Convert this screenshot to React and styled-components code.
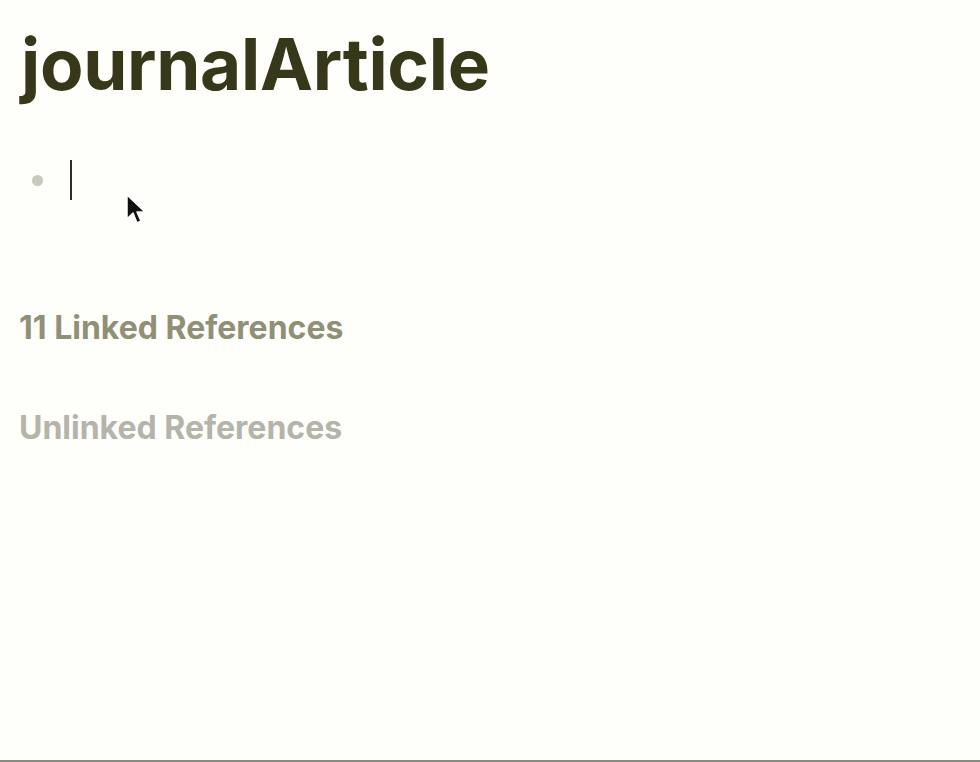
import React from "react";
import styled, { createGlobalStyle } from "styled-components";

const Global = createGlobalStyle`
  html, body { margin: 0; padding: 0; background: #fefefa; }
  body { font-family: Inter, "Noto Sans", sans-serif; }
`;

const Page = styled.div`
  position: relative;
  width: 980px;
  height: 762px;
  box-sizing: border-box;
  border-bottom: 2px solid #8a8a82;
  padding: 24px 19px 0 19px;
  overflow: hidden;
`;

const Title = styled.h1`
  margin: 0 0 0 2px;
  font-size: 71px;
  font-weight: 700;
  line-height: 80px;
  letter-spacing: -0.3px;
  color: #37371a;
`;

const BlockRow = styled.div`
  display: flex;
  align-items: center;
  height: 40px;
  margin-top: 56px;
  padding-left: 13px;
`;

const Bullet = styled.span`
  width: 11px;
  height: 11px;
  border-radius: 50%;
  background: #c8c8be;
  flex: none;
`;

const Caret = styled.span`
  width: 2px;
  height: 40px;
  margin-left: 27px;
  background: #2e2e24;
  flex: none;
`;

const SectionHeading = styled.h2`
  margin: ${(p) => p.$top}px 0 0 0;
  font-size: 32px;
  font-weight: 700;
  line-height: 40px;
  color: ${(p) => p.$color};
`;

const Pointer = styled.svg`
  position: absolute;
  left: 124px;
  top: 192px;
`;

export default function App() {
  return (
    <>
      <Global />
      <Page>
        <Title>journalArticle</Title>
        <BlockRow>
          <Bullet />
          <Caret />
        </BlockRow>
        <SectionHeading $top={108} $color="#909076">11 Linked References</SectionHeading>
        <SectionHeading $top={60} $color="#b4b4aa">Unlinked References</SectionHeading>
        <Pointer width="26" height="38" viewBox="0 0 26 38">
          <path d="M3 3 L3 27 L9 21 L13 31 L17 29 L13 20 L21 20 Z" fill="#111" stroke="#fff" strokeWidth="1.5" strokeLinejoin="round" />
        </Pointer>
      </Page>
    </>
  );
}
